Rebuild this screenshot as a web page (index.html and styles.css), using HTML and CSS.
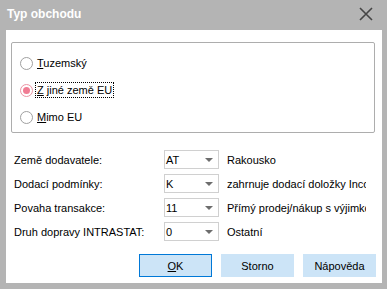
FILE: index.html
```html
<!DOCTYPE html>
<html lang="cs">
<head>
    <meta charset="UTF-8">
    <title>Typ obchodu</title>
    <link rel="stylesheet" href="styles.css">
</head>
<body>
    <div class="window">
        <div class="titlebar">
            <span class="title">Typ obchodu</span>
            <svg class="close" width="14" height="14" viewBox="0 0 14 14">
                <path d="M1 1 L13 13 M13 1 L1 13" stroke="#454545" stroke-width="1.6" fill="none"/>
            </svg>
        </div>
        <div class="client">
            <div class="group">
                <label class="radio"><span class="dot"></span><span class="radio-text"><u>T</u>uzemský</span></label>
                <label class="radio checked"><span class="dot"></span><span class="radio-text focus"><u>Z</u> jiné země EU</span></label>
                <label class="radio"><span class="dot"></span><span class="radio-text"><u>M</u>imo EU</span></label>
            </div>
            <div class="fields">
                <div class="row">
                    <span class="label">Země dodavatele:</span>
                    <span class="combo">AT<span class="arrow"></span></span>
                    <span class="desc">Rakousko</span>
                </div>
                <div class="row">
                    <span class="label">Dodací podmínky:</span>
                    <span class="combo">K<span class="arrow"></span></span>
                    <span class="desc">zahrnuje dodací doložky Incoterms</span>
                </div>
                <div class="row">
                    <span class="label">Povaha transakce:</span>
                    <span class="combo">11<span class="arrow"></span></span>
                    <span class="desc">Přímý prodej/nákup s výjimkou</span>
                </div>
                <div class="row">
                    <span class="label">Druh dopravy INTRASTAT:</span>
                    <span class="combo">0<span class="arrow"></span></span>
                    <span class="desc">Ostatní</span>
                </div>
            </div>
            <div class="buttons">
                <button class="btn default"><u>O</u>K</button>
                <button class="btn">Storno</button>
                <button class="btn">Nápověda</button>
            </div>
        </div>
    </div>
</body>
</html>
```

FILE: styles.css
```css
body {
    margin: 0;
    background: #b4b4b4;
    font-family: 'Liberation Sans', Arial, sans-serif;
    font-size: 11px;
    color: #000;
}
.window {
    width: 387px;
    height: 289px;
    display: flex;
    flex-direction: column;
}
.titlebar {
    height: 30px;
    display: flex;
    align-items: center;
    justify-content: space-between;
    padding: 0 14px 2px 7px;
    box-sizing: border-box;
}
.title {
    color: #fff;
    font-weight: bold;
    font-size: 12px;
}
.close {
    display: block;
}
.client {
    background: #fff;
    margin: 0 5px 0 6px;
    height: 253px;
    display: flex;
    flex-direction: column;
}
.group {
    margin: 12px 7px 0 5px;
    height: 91px;
    border: 1px solid #adadad;
    border-radius: 2px;
    box-sizing: border-box;
    display: flex;
    flex-direction: column;
    padding: 13px 0 0 8px;
    gap: 13px;
}
.radio {
    display: flex;
    align-items: center;
    height: 14px;
}
.dot {
    width: 13px;
    height: 13px;
    border: 1px solid #a0a0a0;
    border-radius: 50%;
    box-sizing: border-box;
    margin-right: 2px;
    display: flex;
    align-items: center;
    justify-content: center;
}
.checked .dot {
    border-color: #ec94a4;
}
.checked .dot::after {
    content: '';
    width: 7px;
    height: 7px;
    border-radius: 50%;
    background: #f07c93;
}
.radio-text {
    padding: 0 1px;
    line-height: 14px;
    border: 1px dotted transparent;
}
.radio-text.focus {
    border-color: #000;
}
.fields {
    margin: 17px 0 0 8px;
    display: flex;
    flex-direction: column;
    gap: 5px;
}
.row {
    display: flex;
    align-items: center;
    height: 19px;
}
.label {
    width: 150px;
}
.combo {
    width: 55px;
    height: 19px;
    border: 1px solid #d0d0d0;
    box-sizing: border-box;
    display: flex;
    align-items: center;
    padding-left: 1px;
    position: relative;
}
.arrow {
    position: absolute;
    right: 5px;
    top: 7px;
    width: 0;
    height: 0;
    border-left: 4px solid transparent;
    border-right: 4px solid transparent;
    border-top: 4px solid #6d6d6d;
}
.desc {
    margin-left: 8px;
    width: 139px;
    white-space: nowrap;
    overflow: hidden;
}
.buttons {
    margin: 13px 6px 0 0;
    display: flex;
    justify-content: flex-end;
    gap: 9px;
}
.btn {
    width: 73px;
    height: 23px;
    background: #cce4f7;
    border: 1px solid #cce4f7;
    font-family: inherit;
    font-size: 11px;
    color: #000;
    padding: 0;
}
.btn.default {
    border-color: #0078d7;
}
```
